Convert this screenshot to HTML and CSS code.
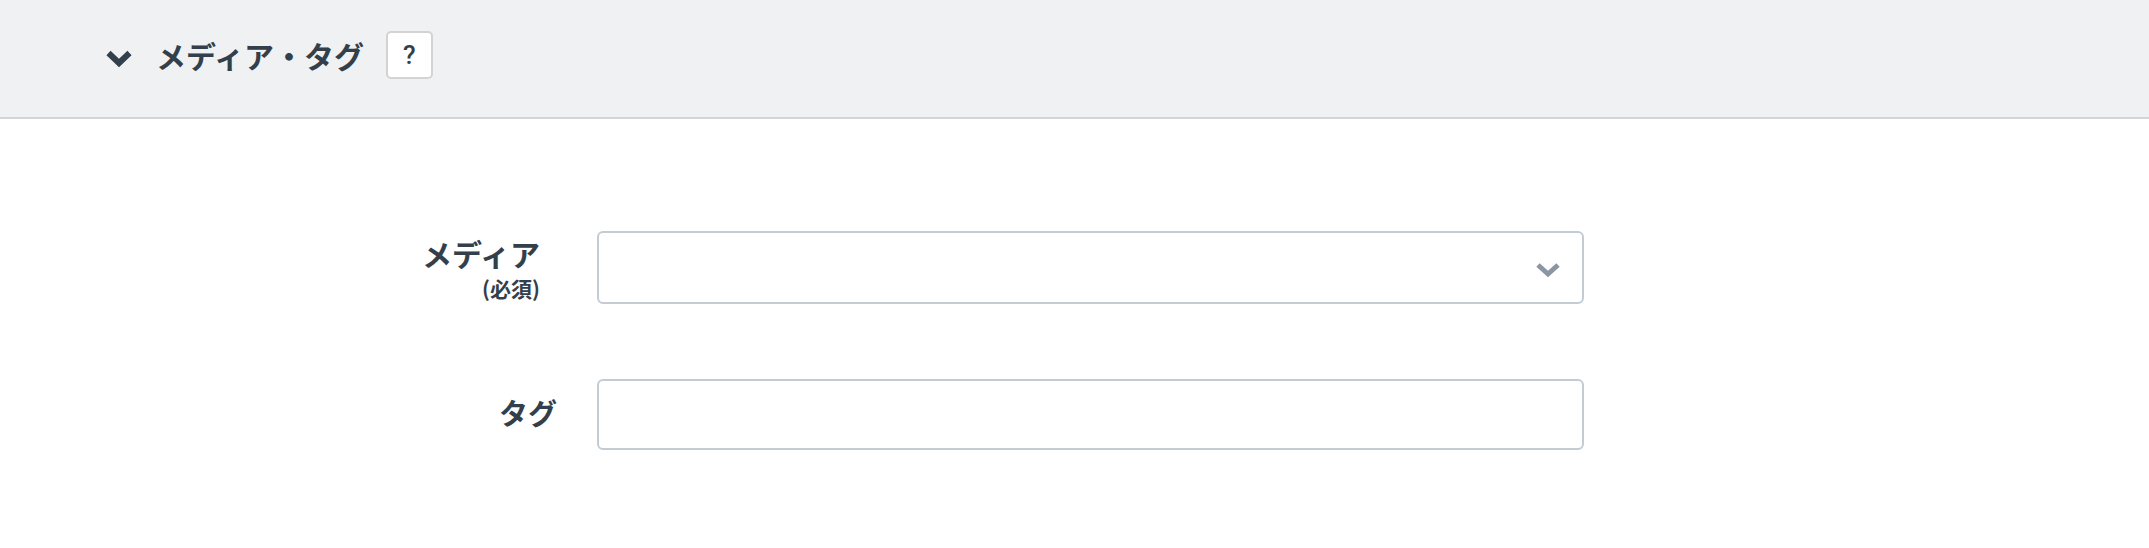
FILE: index.html
```html
<!DOCTYPE html>
<html lang="ja">
<head>
<meta charset="utf-8">
<link rel="stylesheet" href="styles.css">
</head>
<body>
<div class="panel-header">
  <svg class="toggle" width="28" height="18" viewBox="0 0 28 18"><path d="M3.5 3 L14 13 L24.5 3" fill="none" stroke="#333f4b" stroke-width="6" stroke-linecap="butt" stroke-linejoin="miter"/></svg>
  <h2 class="panel-title">メディア・タグ</h2>
  <span class="help">?</span>
</div>
<div class="panel-body">
  <div class="row">
    <div class="label label-req">
      <div class="label-main">メディア</div>
      <div class="label-sub">(必須)</div>
    </div>
    <div class="field select">
      <svg class="caret" width="26" height="16" viewBox="0 0 26 16"><path d="M3 3 L13 12 L23 3" fill="none" stroke="#8a96a2" stroke-width="5"/></svg>
    </div>
  </div>
  <div class="row row-tag">
    <div class="label label-tag">
      <div class="label-main">タグ</div>
    </div>
    <div class="field input"></div>
  </div>
</div>
</body>
</html>
```
FILE: styles.css
```css
html, body {
  margin: 0;
  padding: 0;
  background: #ffffff;
  font-family: "Lato", "Noto Sans CJK JP", sans-serif;
  color: #333f4b;
}
.panel-header {
  height: 119px;
  box-sizing: border-box;
  padding-bottom: 7px;
  background: #f0f1f3;
  border-bottom: 2px solid #d2d6da;
  display: flex;
  align-items: center;
  padding-left: 105px;
}
.toggle {
  display: block;
  margin-top: 7px;
}
.panel-title {
  margin: 0 0 0 23px;
  font-family: "Noto Sans CJK JP", sans-serif;
  font-weight: 700;
  font-size: 30px;
  line-height: 1;
  color: #333f4b;
}
.help {
  margin-left: 22px;
  width: 43px;
  height: 44px;
  border: 2px solid #d3d3d3;
  border-radius: 5px;
  background: #fff;
  display: flex;
  align-items: center;
  justify-content: center;
  font-family: "Roboto", sans-serif;
  font-weight: 500;
  font-size: 26px;
  color: #333f4b;
}
.panel-body {
  padding-top: 112px;
}
.row {
  display: flex;
  align-items: flex-start;
}
.row-tag {
  margin-top: 75px;
  align-items: center;
}
.label {
  box-sizing: border-box;
  text-align: right;
  font-family: "Noto Sans CJK JP", sans-serif;
  font-weight: 700;
  color: #333f4b;
}
.label-req {
  padding-right: 57px;
  width: 597px;
  padding-top: 4px;
}
.label-tag {
  width: 557px;
  margin-right: 40px;
  margin-top: -6px;
}
.label-main {
  font-size: 29px;
  line-height: 40px;
}
.label-req .label-main {
  font-size: 30px;
  line-height: 36px;
}
.label-sub {
  font-size: 21px;
  line-height: 26px;
  margin-top: 4px;
}
.field {
  width: 987px;
  box-sizing: border-box;
  border: 2px solid #c3ccd5;
  border-radius: 6px;
  background: #fff;
  position: relative;
}
.select {
  height: 73px;
  display: flex;
  align-items: center;
  justify-content: flex-end;
  padding-right: 21px;
}
.caret {
  display: block;
  margin-top: 4px;
}
.input {
  height: 71px;
}
```
